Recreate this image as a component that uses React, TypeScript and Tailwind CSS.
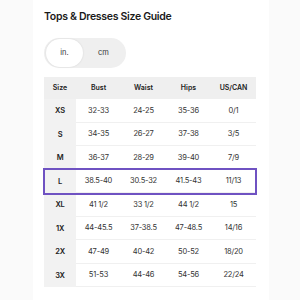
import React from "react";

const rows = [
  ["XS", "32-33", "24-25", "35-36", "0/1"],
  ["S", "34-35", "26-27", "37-38", "3/5"],
  ["M", "36-37", "28-29", "39-40", "7/9"],
  ["L", "38.5-40", "30.5-32", "41.5-43", "11/13"],
  ["XL", "41 1/2", "33 1/2", "44 1/2", "15"],
  ["1X", "44-45.5", "37-38.5", "47-48.5", "14/16"],
  ["2X", "47-49", "40-42", "50-52", "18/20"],
  ["3X", "51-53", "44-46", "54-56", "22/24"],
];

export default function App() {
  return (
    <div
      className="w-[300px] h-[300px] bg-[#fafafa] flex overflow-hidden"
      style={{ fontFamily: "Inter, 'Open Sans', sans-serif" }}
    >
      <div className="ml-[33px] w-[236px] h-full bg-white pl-[11px] pt-[10px] flex flex-col">
        <div className="text-[10.5px] leading-[14px] font-semibold tracking-[-0.3px] text-[#1a1a1a]">
          Tops &amp; Dresses Size Guide
        </div>
        <div className="mt-[14px] w-[82px] h-[30px] rounded-full bg-[#efefef] flex items-center pl-[2px]">
          <div className="w-[37px] h-[28px] rounded-full bg-white shadow-[0_0_2px_rgba(0,0,0,0.12)] flex items-center justify-center text-[7.5px] text-[#333]">
            in.
          </div>
          <div className="flex-1 flex items-center justify-center text-[7.5px] text-[#333] pr-[2px]">
            cm
          </div>
        </div>
        <div className="mt-[9px] w-[212px] flex flex-col">
          <div className="h-[22px] bg-[#efefef] flex items-center text-[7px] font-semibold text-[#222]">
            <div className="w-[32px] text-center">Size</div>
            <div className="w-[45px] text-center">Bust</div>
            <div className="w-[45px] text-center">Waist</div>
            <div className="w-[45px] text-center">Hips</div>
            <div className="w-[45px] text-center">US/CAN</div>
          </div>
          {rows.map((r) => {
            const hl = r[0] === "L";
            return (
              <div
                key={r[0]}
                className={
                  hl
                    ? "relative h-[23.5px] flex items-center text-[7.5px] tracking-[-0.2px] text-[#333] z-10"
                    : "relative h-[23.5px] flex items-center text-[7.5px] tracking-[-0.2px] text-[#333]"
                }
              >
                <div className="w-[32px] h-full bg-[#f2f2f2] flex items-center justify-center font-semibold text-[#222]">
                  {r[0]}
                </div>
                <div className="flex-1 h-full flex items-center border-b border-[#f0f0f0]">
                  {r.slice(1).map((c, i) => (
                    <div key={i} className="w-[45px] text-center">
                      {c}
                    </div>
                  ))}
                </div>
                {hl && (
                  <div className="absolute left-[-1px] right-[-1px] top-[-2px] bottom-[-2px] border-2 border-[#6f52c2]" />
                )}
              </div>
            );
          })}
        </div>
      </div>
    </div>
  );
}
